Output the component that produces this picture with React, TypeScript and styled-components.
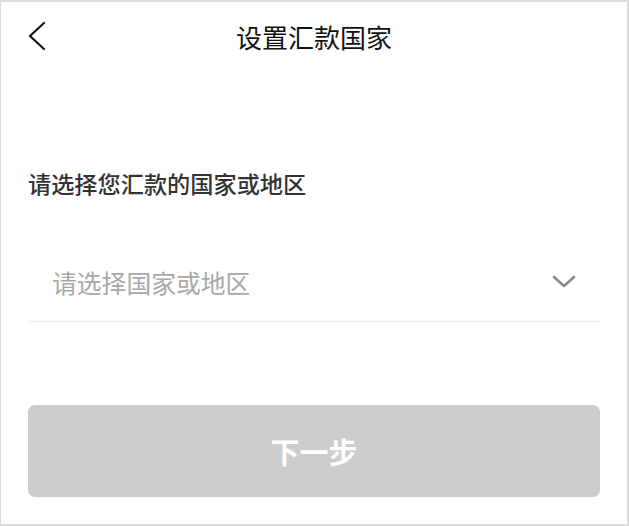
import React from "react";
import styled, { createGlobalStyle } from "styled-components";

const Global = createGlobalStyle`
  html, body { margin: 0; padding: 0; background: #fff; }
  body { font-family: "Noto Sans CJK SC", "Noto Sans", sans-serif; }
  * { box-sizing: border-box; }
`;

const Page = styled.div`
  width: 629px;
  height: 526px;
  border: 2px solid #dcdcdc;
  border-left-width: 1px;
  background: #fff;
  display: flex;
  flex-direction: column;
`;

const NavBar = styled.header`
  height: 69px;
  display: grid;
  grid-template-columns: 60px 1fr 60px;
  align-items: center;
  padding-bottom: 1px;
`;

const BackButton = styled.button`
  border: none;
  background: none;
  padding: 0 0 0 26px;
  height: 40px;
  display: flex;
  align-items: center;
  cursor: pointer;
`;

const Title = styled.h1`
  margin: 0;
  text-align: center;
  font-size: 26px;
  font-weight: 400;
  color: #111;
`;

const Content = styled.main`
  padding: 97px 27px 0 27px;
  display: flex;
  flex-direction: column;
`;

const Label = styled.div`
  font-size: 23.2px;
  font-weight: 500;
  color: #333;
  line-height: 30px;
`;

const SelectRow = styled.div`
  margin-top: 57px;
  height: 67px;
  display: flex;
  align-items: center;
  justify-content: space-between;
  padding: 0 24px 12px 24px;
  border-bottom: 1px solid #ececec;
`;

const Placeholder = styled.span`
  font-size: 24.8px;
  color: #a8a8a8;
`;

const Button = styled.button`
  margin-top: 83px;
  height: 92px;
  border: none;
  border-radius: 7px;
  background: #cccccc;
  color: #fff;
  font-family: inherit;
  font-size: 29px;
  font-weight: 700;
  display: flex;
  align-items: center;
  justify-content: center;
  padding-bottom: 2px;
`;

export default function App() {
  return (
    <>
      <Global />
      <Page>
        <NavBar>
          <BackButton aria-label="back">
            <svg width="20" height="30" viewBox="0 0 20 30" fill="none">
              <path d="M17 2 L3 15 L17 28" stroke="#111" strokeWidth="2.2" strokeLinecap="round" strokeLinejoin="round" />
            </svg>
          </BackButton>
          <Title>设置汇款国家</Title>
          <div />
        </NavBar>
        <Content>
          <Label>请选择您汇款的国家或地区</Label>
          <SelectRow>
            <Placeholder>请选择国家或地区</Placeholder>
            <svg width="24" height="14" viewBox="0 0 24 14" fill="none">
              <path d="M2 2 L12 11 L22 2" stroke="#8a8a8a" strokeWidth="2.6" strokeLinecap="round" strokeLinejoin="round" />
            </svg>
          </SelectRow>
          <Button>下一步</Button>
        </Content>
      </Page>
    </>
  );
}
